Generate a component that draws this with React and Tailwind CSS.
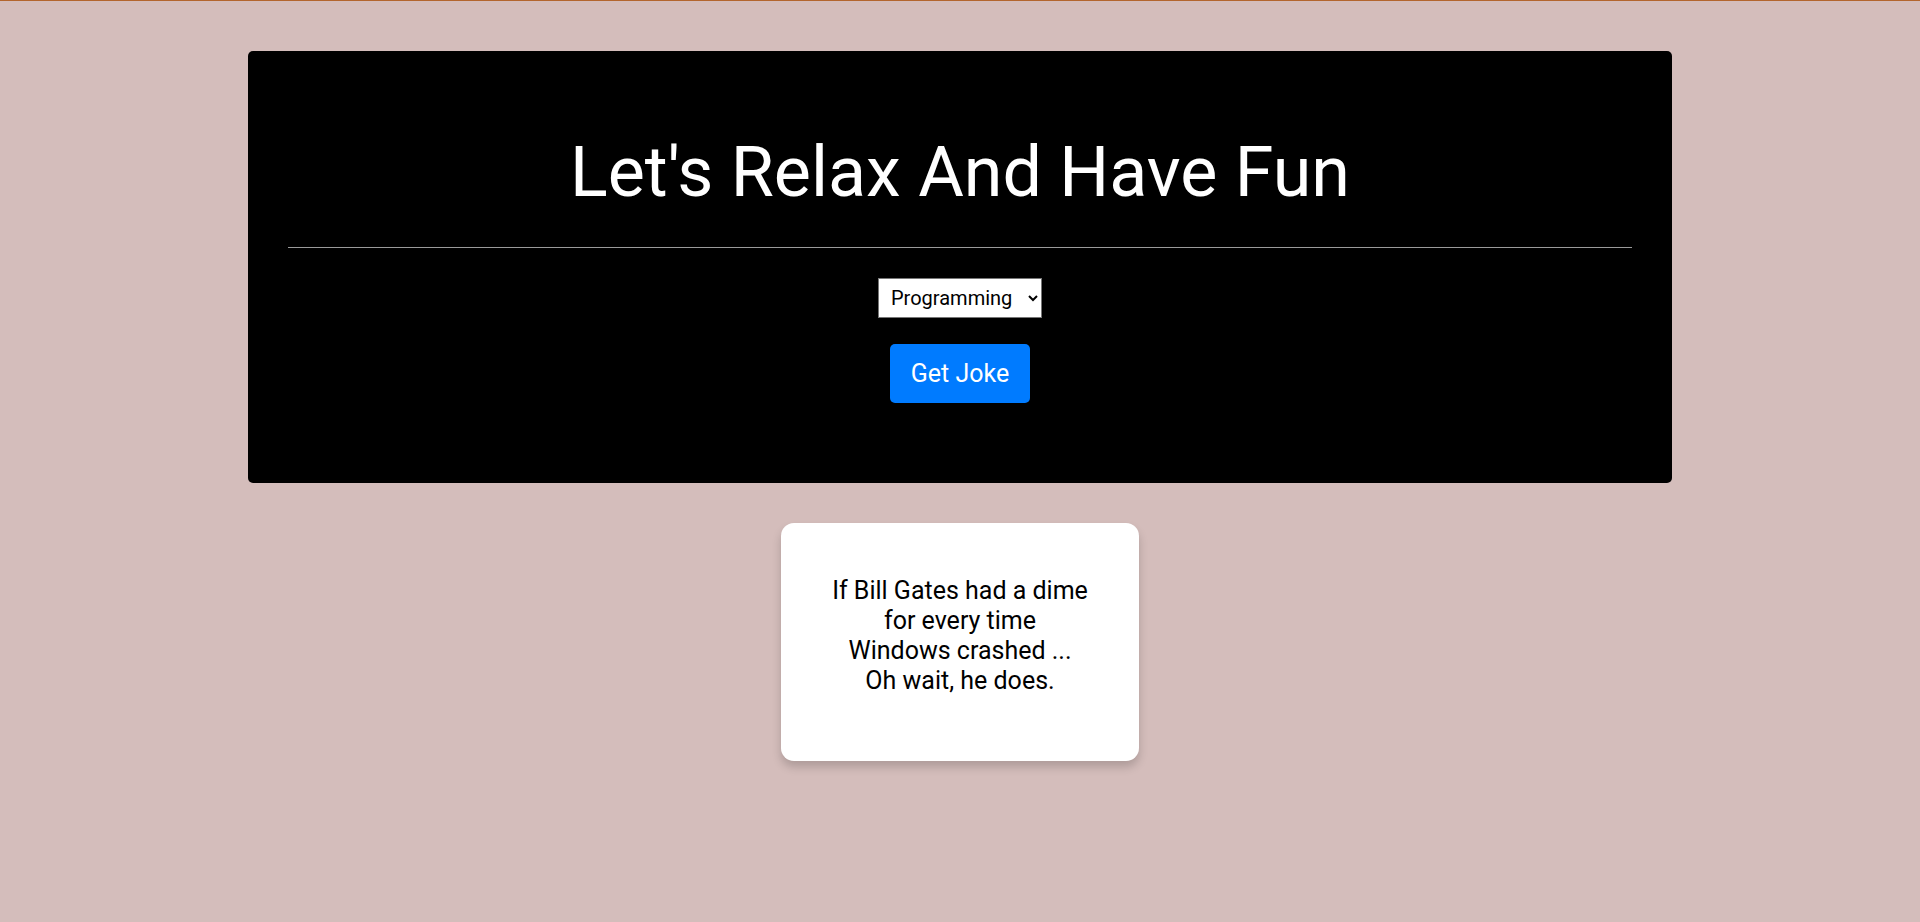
export default function App() {
  return (
    <div
      className="min-h-[922px] w-full bg-[#d4bdbb] border-t border-[#b3652d] overflow-hidden"
      style={{ fontFamily: "Roboto, 'Liberation Sans', sans-serif" }}
    >
      <div className="mx-[248px] mt-[50px] bg-black rounded-[5px] px-[40px] pt-[78px] pb-[80px] flex flex-col items-center">
        <h1 className="text-white text-[70px] leading-[86px] font-normal text-center">
          Let's Relax And Have Fun
        </h1>
        <hr className="w-full mt-[32px] border-0 border-t border-[#9a9a9a]" />
        <select
          defaultValue="Programming"
          className="mt-[30px] h-[40px] w-[164px] bg-white text-black text-[20px] border border-[#767676] pl-[8px] pr-[4px]"
          style={{ fontFamily: "Roboto, 'Liberation Sans', sans-serif" }}
        >
          <option>Programming</option>
          <option>Misc</option>
          <option>Dark</option>
          <option>Pun</option>
        </select>
        <button className="mt-[26px] h-[59px] w-[140px] bg-[#007bff] text-white text-[25px] rounded-[5px]">
          Get Joke
        </button>
      </div>
      <div className="flex justify-center mt-[40px]">
        <div className="w-[358px] bg-white rounded-[13px] shadow-[0_6px_10px_rgba(0,0,0,0.18)] pt-[53px] pb-[65px] text-center text-[25px] leading-[30px] text-black">
          If Bill Gates had a dime
          <br />
          for every time
          <br />
          Windows crashed ...
          <br />
          Oh wait, he does.
        </div>
      </div>
    </div>
  );
}
